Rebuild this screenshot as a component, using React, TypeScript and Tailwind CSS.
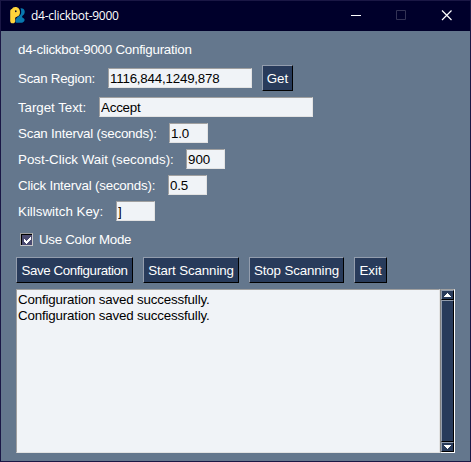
import type { ReactNode } from "react";

function Label({ children, className = "" }: { children: ReactNode; className?: string }) {
  return <span className={`shrink-0 whitespace-nowrap pt-[2px] pl-[2px] text-white ${className}`}>{children}</span>;
}

function Field({ value, className }: { value: string; className: string }) {
  return (
    <input
      readOnly
      value={value}
      className={`h-5 shrink-0 rounded-none border border-t-[#a0a0a0] border-l-[#a0a0a0] border-r-[#e3e3e3] border-b-[#e3e3e3] bg-[#f0f3f7] pt-px pl-px text-black outline-none ${className}`}
    />
  );
}

function Button({ children, className }: { children: ReactNode; className: string }) {
  return (
    <button
      className={`flex h-[26px] shrink-0 items-center justify-center whitespace-nowrap border border-t-[#939dad] border-l-[#939dad] border-r-black border-b-black bg-[#283b5b] pt-[2px] leading-4 text-white ${className}`}
    >
      {children}
    </button>
  );
}

function ScrollArrow({ down = false }: { down?: boolean }) {
  return (
    <div className="flex h-[10px] w-[13px] shrink-0 items-center justify-center border border-t-[#939dad] border-l-[#939dad] border-r-black border-b-black bg-[#283b5b]">
      <svg width="7" height="4" viewBox="0 0 7 4" shapeRendering="crispEdges" className={down ? "rotate-180" : ""}>
        <path d="M3 0h1v1h1v1h1v1h1v1H0V3h1V2h1V1h1z" fill="#fff" />
      </svg>
    </div>
  );
}

function TitleBar() {
  return (
    <header className="flex h-[30px] shrink-0 items-center bg-[#00002b] pl-[9px]">
      <svg width="16" height="18" viewBox="0 0 16 18" className="shrink-0">
        <path
          d="M10.500 1.200c2.200-.3 3.900.9 4.200 3 .2 1.900-.5 3.200-1.900 4.300-.9.700-.9 1.500-.1 2.200 1.300.7 1.900 1.300 1.900 2.300-.1 1.300-1.300 2.500-3 2.700H6.500c-1-.3-1.200-1.200-1-2.300.2-1.500 1-2.500 2.200-3.300l2-1.500c1-1 1.500-2 1.500-3.600 0-1.400-.2-2.500-.7-3.800z"
          fill="#0878ae"
        />
        <path
          d="M.2 4.500C.2 3.100.8 2.300 2 2 2.400.7 3.500 0 5.300 0 8.300 0 10 2.200 10 5c0 2.900-1.400 4.500-3.700 4.900-.8.200-1.100.7-1.100 1.500v2.300c0 1.700-.8 2.600-2.500 2.600S.2 15.400.2 13.700z"
          fill="#ffd43b"
        />
        <ellipse cx="5.800" cy="4.300" rx=".8" ry="1" fill="#00002b" />
      </svg>
      <span className="ml-[5px] w-[312px] shrink-0 text-[12px] leading-[30px] tracking-[-0.28px] text-white [font-family:'Open_Sans','Noto_Sans',sans-serif]">
        d4-clickbot-9000
      </span>
      <svg width="128" height="30" viewBox="0 0 128 30" className="shrink-0" fill="none">
        <path d="M8 14.5h10" stroke="#fff" />
        <path d="M53.5 9.5h9v9h-9z" stroke="#333355" />
        <path d="M99 9.5l9.5 9.5M108.500 9.500L99 19" stroke="#fff" strokeWidth="1.2" />
      </svg>
    </header>
  );
}

export default function App() {
  return (
    <div className="flex h-[462px] w-[471px] flex-col overflow-hidden border border-[#1a1745] bg-[#64778d] text-[13.33px] leading-4 [font-family:'Liberation_Sans',Arial,sans-serif]">
      <TitleBar />
      <main className="flex flex-col pl-[15px]">
        <div className="flex h-[34px] items-center pt-[2px]">
          <Label className="tracking-[-0.24px]">d4-clickbot-9000 Configuration</Label>
        </div>
        <div className="flex h-[26px] items-center">
          <Label className="w-[92px] tracking-[-0.25px]">Scan Region:</Label>
          <Field value="1116,844,1249,878" className="w-36 tracking-[-0.2px]" />
          <Button className="ml-[10px] w-[31px]">Get</Button>
        </div>
        <div className="mt-[6px] flex h-5 items-center">
          <Label className="w-[83px] tracking-[-0.05px]">Target Text:</Label>
          <Field value="Accept" className="w-[214px] tracking-[-0.2px]" />
        </div>
        <div className="mt-[6px] flex h-5 items-center">
          <Label className="w-[153px] tracking-[-0.21px]">Scan Interval (seconds):</Label>
          <Field value="1.0" className="w-[39px] tracking-[-0.2px]" />
        </div>
        <div className="mt-[6px] flex h-5 items-center">
          <Label className="w-[170px]">Post-Click Wait (seconds):</Label>
          <Field value="900" className="w-[39px]" />
        </div>
        <div className="mt-[6px] flex h-5 items-center">
          <Label className="w-[152px] tracking-[-0.2px]">Click Interval (seconds):</Label>
          <Field value="0.5" className="w-[39px] tracking-[-0.2px]" />
        </div>
        <div className="mt-[6px] flex h-5 items-center">
          <Label className="w-[100px]">Killswitch Key:</Label>
          <Field value="]" className="w-[39px]" />
        </div>
        <label className="mt-[6px] flex h-[25px] items-center pl-1">
          <span className="flex size-[13px] items-center justify-center border border-t-[#a0a0a0] border-l-[#a0a0a0] border-r-[#c8c8c8] border-b-[#c8c8c8] bg-[#4a4a70]">
            <span className="flex size-[11px] items-center justify-center border-t border-l border-black">
              <svg width="7" height="7" viewBox="0 0 7 7" shapeRendering="crispEdges">
                <path d="M0 2h1v1h1v1h1V3h1V2h1V1h1V0h1v3H6v1H5v1H4v1H3v1H2V6H1V5H0z" fill="#fff" />
              </svg>
            </span>
          </span>
          <span className="ml-[6px] tracking-[-0.29px] text-white">Use Color Mode</span>
        </label>
        <div className="mt-[5px] flex gap-[10px]">
          <Button className="w-[117px] tracking-[-0.4px]">Save Configuration</Button>
          <Button className="w-24 tracking-[-0.13px]">Start Scanning</Button>
          <Button className="w-[95px] tracking-[-0.13px]">Stop Scanning</Button>
          <Button className="w-[33px]">Exit</Button>
        </div>
        <div className="mt-[6px] flex h-[164px]">
          <div className="w-[424px] border border-t-[#a0a0a0] border-l-[#a0a0a0] border-r-[#e3e3e3] border-b-[#e3e3e3] bg-[#f0f3f7] pt-[2px] pl-px tracking-[-0.16px] text-black">
            <p>Configuration saved successfully.</p>
            <p>Configuration saved successfully.</p>
          </div>
          <div className="flex w-[15px] flex-col border border-t-[#a0a0a0] border-l-[#808080] border-r-white border-b-white bg-[#283b5b]">
            <ScrollArrow />
            <div className="flex-1 border border-t-[#939dad] border-l-[#939dad] border-r-black border-b-black" />
            <ScrollArrow down />
          </div>
        </div>
      </main>
    </div>
  );
}
